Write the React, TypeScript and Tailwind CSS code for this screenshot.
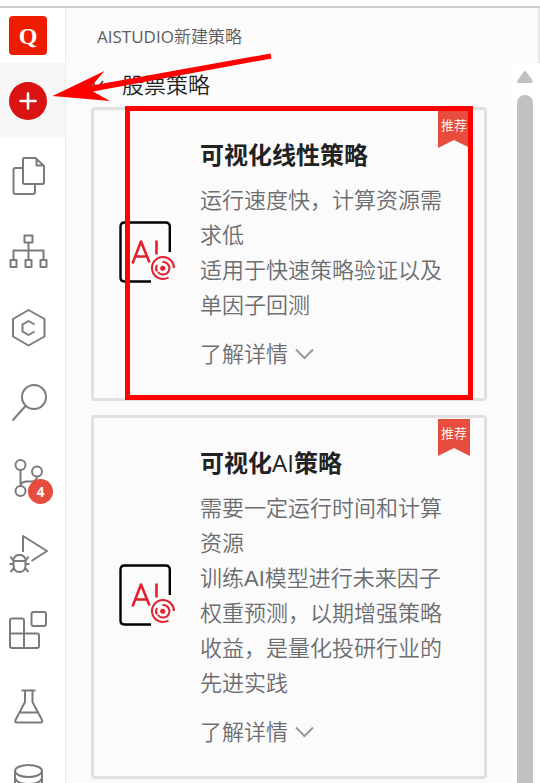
import React from "react";

function SideItem({ label, children }: { label: string; children: React.ReactNode }) {
  return (
    <button type="button" aria-label={label} className="relative flex h-[76px] w-full shrink-0 items-center justify-center">
      <svg width="40" height="40" viewBox="0 0 40 40" fill="none" stroke="#7b7b7b" strokeWidth="2" strokeLinejoin="round">
        {children}
      </svg>
    </button>
  );
}

function Sidebar() {
  return (
    <nav className="flex w-[66px] shrink-0 flex-col overflow-hidden border-r border-[#ebebeb] bg-white pr-[9px]">
      <a href="#home" aria-label="Q" className="flex h-[55px] shrink-0 items-center pl-[9px]">
        <span className="flex h-[39px] w-[38px] items-center justify-center rounded bg-[#ee1c00] font-['Liberation_Serif',serif] text-[24px] leading-none font-bold text-white">
          Q
        </span>
      </a>
      <div className="-mr-[9px] flex h-[75px] shrink-0 items-center bg-[#f7f7f7] pl-[9px]">
        <button type="button" aria-label="新建" className="flex size-[38px] items-center justify-center rounded-full bg-[#d91212]">
          <svg width="20" height="20" viewBox="0 0 20 20" stroke="#fff" strokeWidth="2.6" strokeLinecap="round">
            <path d="M10 2.5v15M2.500 10h15" />
          </svg>
        </button>
      </div>
      <div className="-mt-px -ml-px flex flex-col">
        <SideItem label="文件">
          <path d="M15.500 3H27.500L36 11V27.500Q36 29 34.500 29H16.500Q15 29 15 27.500V4.500Q15 3 16.500 3M28.500 3.500V10.500H35.500M15 13H7.500Q5.500 13 5.500 15V37Q5.500 39 7.500 39H25Q27 39 27 37V29.500" />
        </SideItem>
        <SideItem label="结构">
          <path d="M16.500 4.500h8v7h-8zM2.500 29h6v7h-6zM17.500 29h6v7h-6zM32.500 29h6v7h-6zM20.500 12V29M5.500 29V19.500H35.500V29" />
        </SideItem>
        <SideItem label="代码">
          <path d="M20.500 3L36.500 12V29.500L20.500 38.500L5 29.500V12ZM26.500 17.500L20.500 14L14.500 17.500V24.500L20.500 28L26.500 24.500" />
        </SideItem>
        <SideItem label="搜索">
          <circle cx="26" cy="14" r="12" />
          <path d="M17.500 23L4.500 37.500" />
        </SideItem>
        <div className="relative">
          <SideItem label="版本">
            <circle cx="12.500" cy="6" r="5" />
            <circle cx="29" cy="12.500" r="5" />
            <circle cx="12.500" cy="32" r="5" />
            <path d="M12.500 11V27M12.500 26Q14 22.500 19 22.500H25Q29 21 29 17.500" />
          </SideItem>
          <span className="absolute top-[38px] left-[29px] flex size-[25px] items-center justify-center rounded-full bg-[#e74c3c] font-['Open_Sans',sans-serif] text-[14px] leading-none font-bold text-white">
            4
          </span>
        </div>
        <SideItem label="调试">
          <path d="M15 17V1L39 16L23.500 26" />
          <path d="M6 24.500Q6 20 11.500 20T17 24.500M5.500 26H17.500V31Q17 37 11.500 37T5.500 31ZM5.500 26L2.500 21.500M17.500 26L20.500 21.500M1.500 29H5.500M17.500 29H21.500M6 33L2.500 37M17 33L20.500 37M11.500 26V27" />
        </SideItem>
        <SideItem label="扩展">
          <path d="M4 7.500H14Q16 7.500 16 9.500V22.500H29Q31 22.500 31 24.500V35Q31 37 29 37H4Q2 37 2 35V9.500Q2 7.500 4 7.500M2 22.500H16V37" />
          <rect x="23.500" y="1" width="14.500" height="14" rx="2" />
        </SideItem>
        <SideItem label="实验">
          <path d="M13.500 3.500H27.500M17 3.500V15L7.500 33Q6.500 35.500 9 35.500H32.500Q35 35.500 34 33L24.500 15V3.500M12 25.500H29.500" />
        </SideItem>
        <SideItem label="数据">
          <ellipse cx="20.500" cy="8" rx="13.500" ry="6" />
          <path d="M7 8V31Q9 37 20.500 37T34 31V8M7 15Q9 21 20.500 21T34 15" />
        </SideItem>
      </div>
    </nav>
  );
}

function AiIcon() {
  return (
    <svg className="-mt-1 shrink-0" width="57" height="62" viewBox="0 0 57 62" fill="none" strokeWidth="2.400">
      <path stroke="#000" d="M50.800 31V5.500Q50.800 1.500 46.800 1.500H5.500Q1.500 1.500 1.500 5.500V56.500Q1.500 60.500 5.500 60.500H32" />
      <g stroke="#e3202e">
        <path strokeWidth="2.600" strokeLinejoin="round" d="M13.500 42.500L22 20.500L30.500 41.500M16.500 35.500H27.500M37.500 19.500V33.500" />
        <path strokeWidth="2" d="M55 47A11 11 0 0 0 44 36A11 11 0 1 0 49.500 56.500" />
        <path strokeWidth="2" d="M43.500 41A6.300 6.300 0 1 1 39 51M38 50.500A6.300 6.300 0 0 1 38 44" />
      </g>
      <circle cx="43.700" cy="47.200" r="2.500" fill="#e3202e" />
    </svg>
  );
}

function StrategyCard({ title, lines }: { title: React.ReactNode; lines: string[] }) {
  return (
    <article className="relative flex items-center rounded-[4px] border-[3px] border-[#e0e0e0] pt-[27px] pr-[38px] pb-[27px] pl-[25px]">
      <AiIcon />
      <div className="ml-[24px] min-w-0 flex-1 text-[22px] leading-[35px] text-[#6b6d70]">
        <h3 className="text-[24px] leading-[35px] font-bold text-[#222]">{title}</h3>
        <div className="mt-[11px] font-['Liberation_Sans','Noto_Sans_CJK_SC',sans-serif] font-[350]">
          {lines.map((line) => (
            <p key={line}>{line}</p>
          ))}
        </div>
        <button type="button" className="mt-[13px] flex items-center gap-[7px] font-[350]">
          了解详情
          <svg width="19" height="12" viewBox="0 0 19 12" fill="none" stroke="#999" strokeWidth="2">
            <path d="M1 1.500L9.500 10L18 1.500" />
          </svg>
        </button>
      </div>
      <div className="absolute top-[1px] right-[14px]">
        <svg className="block" width="32" height="37" viewBox="0 0 32 37" fill="#e74c3c">
          <path d="M0 0H32V37L16 29L0 37Z" />
        </svg>
        <span className="absolute inset-x-0 top-[4px] text-center text-[13px] leading-[20px] font-[350] text-white">推荐</span>
      </div>
    </article>
  );
}

function Scrollbar() {
  return (
    <div className="mt-[55px] flex w-[28px] shrink-0 flex-col bg-white pl-[5px]">
      <svg className="mt-[8px] shrink-0" width="16" height="12" viewBox="0 0 16 12" fill="#c1c1c1">
        <path d="M6.500 1Q8 -1 9.500 1L15.500 9.500Q16.500 12 14 12H2Q-.5 12 .5 9.500Z" />
      </svg>
      <div className="mt-[12px] w-[16px] flex-1 rounded-t-full bg-[#c1c1c1]" />
    </div>
  );
}

export default function App() {
  return (
    <div className="relative flex h-screen flex-col overflow-hidden bg-white pt-[6px] font-['Open_Sans','Noto_Sans_CJK_SC',sans-serif]">
      <div className="flex min-h-0 flex-1 border-t-2 border-[#ccc]">
        <Sidebar />
        <main className="flex min-w-0 flex-1 bg-[#fbfbfb]">
          <div className="min-w-0 flex-1 pr-[25px] pl-[25px]">
            <h1 className="mt-[17px] ml-[6px] text-[17px] leading-[24px] font-[350] text-[#5c5c5c]">
              <span className="font-normal">AISTUDIO</span>新建策略
            </h1>
            <h2 className="mt-[18px] flex h-[35px] items-center gap-[14px] text-[22px] leading-[35px] font-[350] text-[#222]">
              <svg width="17" height="12" viewBox="0 0 17 12" fill="none" stroke="#333" strokeWidth="1.500">
                <path d="M1 2L6 10L12 2" />
              </svg>
              股票策略
            </h2>
            <div className="mt-[5px] flex flex-col gap-[14px]">
              <StrategyCard title="可视化线性策略" lines={["运行速度快，计算资源需求低", "适用于快速策略验证以及单因子回测"]} />
              <StrategyCard
                title={
                  <>
                    可视化<span className="font-medium">AI</span>策略
                  </>
                }
                lines={["需要一定运行时间和计算资源", "训练AI模型进行未来因子权重预测，以期增强策略收益，是量化投研行业的先进实践"]}
              />
            </div>
          </div>
          <Scrollbar />
        </main>
      </div>
      <div className="pointer-events-none absolute top-[8px] right-0 h-[55px] w-[2px] bg-[#e8e8e8]" />
      <div className="pointer-events-none absolute top-[106px] left-[125px] h-[294px] w-[348px] border-[5px] border-[#f00]" />
      <svg className="pointer-events-none absolute top-[50px] left-[50px]" width="225" height="56" viewBox="0 0 225 56" fill="#f00">
        <path d="M2.500 46L54.500 21L42 35.500L220.500 3.500L221.500 8.500L43 41.500L60 51Z" />
      </svg>
    </div>
  );
}
